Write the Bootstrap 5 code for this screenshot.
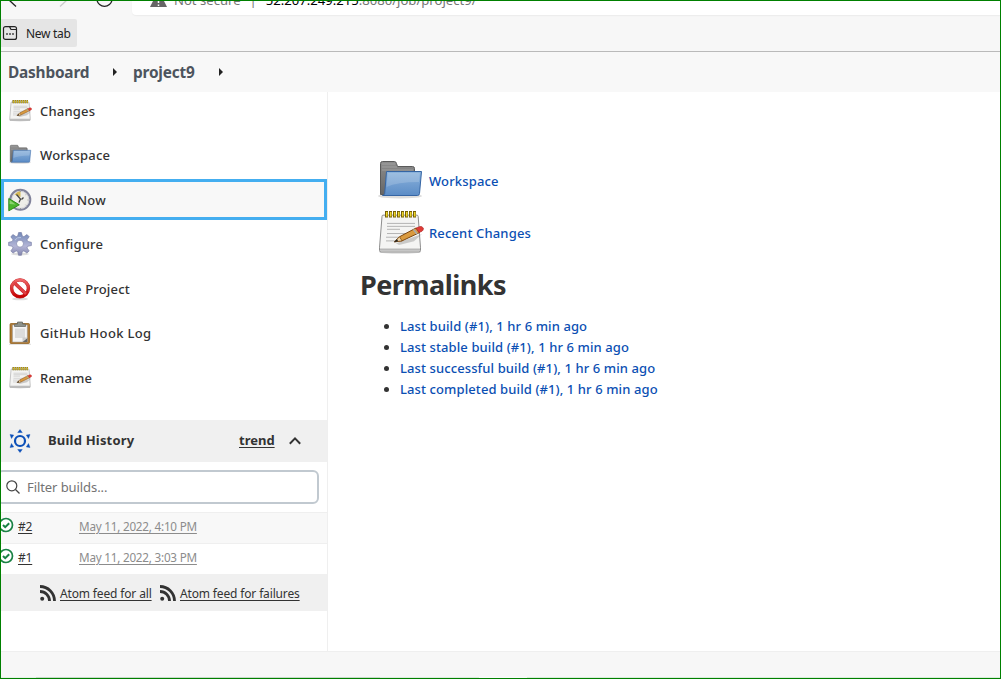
<!DOCTYPE html>
<html lang="en">
<head>
<meta charset="utf-8">
<title>project9 [Jenkins]</title>
<link href="https://cdn.jsdelivr.net/npm/bootstrap@5.3.0/dist/css/bootstrap.min.css" rel="stylesheet">
<style>
  body { font-family: "Noto Sans", "Open Sans", sans-serif; font-size: 13px; font-weight: 500; color: #333; line-height: 21px; }
  .window { width: 1001px; height: 679px; border: 1px solid #008000; overflow: hidden; background: #fff; }
  .chrome { height: 51px; background: #f7f7f7; border-bottom: 1px solid #bababa; flex: none; }
  .toolbar { height: 14px; padding-left: 1px; }
  .address { width: 868px; height: 14px; background: #fff; border-radius: 0 0 0 4px; box-shadow: 0 1px 1px #ececec; padding-left: 18px; font-weight: 400; font-size: 13.1px; color: #767676; white-space: nowrap; }
  .address span { position: relative; top: -11px; }
  .fav { width: 76px; height: 28px; margin-top: 4px; background: #e5e5e5; border-radius: 0 2px 2px 0; font-size: 12px; font-weight: 400; color: #222; letter-spacing: -.3px; }
  .crumbs { height: 40px; background: #f8f8f8; font-size: 15.4px; letter-spacing: -.2px; font-weight: 700; color: #4d545d; flex: none; }
  .arrow { border: 4px solid transparent; border-left-color: #222; border-right: 0; width: 0; height: 0; }
  .side { width: 327px; border-right: 1px solid #efefef; flex: none; }
  .tasks { margin-top: -3.5px; height: 331.5px; }
  .task { height: 40.5px; margin: 2px 0; padding-left: 7px; color: #333; text-decoration: none; letter-spacing: .2px; }
  .task span { padding-top: 1px; }
  .task svg { width: 24px; height: 24px; margin-right: 8px; }
  .task.current { background: #f8f8f8; box-shadow: inset 0 0 0 3px #44aef0; height: 41px; margin-top: 1.5px; }
  .history { height: 42px; background: #f0f0f0; font-weight: 700; }
  .history .fit { padding-bottom: 2px; }
  .history a, .build a, .feeds a { color: inherit; text-underline-offset: 2px; }
  .filter { height: 34px; margin: 8px 8px 8px -4px; border: 2px solid #c1c9d0; border-radius: 6px; color: #737373; font-weight: 400; letter-spacing: -.08px; padding-left: 7px; }
  .build { height: 31px; border-top: 1px solid #efefef; font-size: 12px; font-weight: 400; letter-spacing: -.2px; }
  .build a { padding-bottom: 3px; }
  .build .when { color: #8c8c8c; font-size: 11.7px; letter-spacing: -.22px; }
  .feeds { height: 37px; background: #f0f0f0; font-size: 12px; font-weight: 400; padding-left: 39px; letter-spacing: -.15px; }
  .feeds a { padding-top: 2px; }
  .panel { padding: 63px 0 0 32px; }
  .panel a { color: #0b4fb3; text-decoration: none; letter-spacing: .1px; }
  .big { height: 52px; padding-left: 16px; }
  .big svg { width: 48px; height: 48px; margin-right: 5px; }
  .big .fit { letter-spacing: .15px; }
  h1 { font-size: 27px; letter-spacing: -.55px; font-weight: 700; line-height: 36px; margin: 8px 0 13px; }
  .links { padding-left: 40px; }
  .links li::marker { font-size: 13px; }
  .foot { height: 27px; background: #f7f7f7; border-top: 1px solid #efefef; flex: none; }
  .foot i { height: 1px; }
  .fit { display: inline-block; white-space: nowrap; }
</style>
</head>
<body>
<svg width="0" height="0" class="position-absolute">
  <defs>
    <linearGradient id="blue" x2="0" y2="1"><stop stop-color="#8cb3dc"/><stop offset="1" stop-color="#5b8cc6"/></linearGradient>
    <linearGradient id="gray" x2="0" y2="1"><stop stop-color="#8d8d8d"/><stop offset="1" stop-color="#666"/></linearGradient>
    <linearGradient id="gear" x2="0" y2="1"><stop stop-color="#7289b8"/><stop offset=".6" stop-color="#b4b5d6"/><stop offset="1" stop-color="#8285ad"/></linearGradient>
    <linearGradient id="red" x2="0" y2="1"><stop stop-color="#ee6667"/><stop offset="1" stop-color="#c50000"/></linearGradient>
  </defs>
  <symbol id="folder" viewBox="0 0 48 48">
    <ellipse cx="24" cy="39" rx="22" ry="2.500" fill="#ddd"/>
    <path d="M4.500 37.500V6.500q0-2 2-2h12q1.500 0 2 2l1 3h15q2 0 2 2v26z" fill="url(#gray)" stroke="#5a5a5a"/>
    <path d="M6 7h13M6 10h15M6 13h31" stroke="#aaa" stroke-width=".7"/>
    <path d="M10.500 14.500h35L43.500 36.500q-.2 2-2 2H6.500q2-.5 2.200-2z" fill="url(#blue)" stroke="#3565a4"/>
    <path d="M11.800 16h32L43 25Q21 25 10.500 30z" fill="#fff" opacity=".17"/>
  </symbol>
  <symbol id="notes" viewBox="0 0 48 48">
   <g transform="translate(0 2) scale(1 .92)">
    <ellipse cx="24" cy="44.500" rx="21" ry="2" fill="#ddd"/>
    <path d="M7 4.500h34q1 0 1.200 1.500l2.300 34v3q0 1.500-1.500 1.500H5q-1.500 0-1.500-1.500v-3L6 6q0-1.500 1-1.500z" fill="#f4f4f3" stroke="#888"/>
    <path d="M4 42h40" stroke="#b7b7b7" stroke-width="2.500"/>
    <path d="M11 13.500h28M11 16.700h28M11 19.900h13M11 24.500h28M10 28.500h20M10 32.500h14" stroke="#aaa" stroke-width=".9"/>
    <path d="M9 3.500h32" stroke="#745f08" stroke-width="7" stroke-dasharray="3 1"/>
    <path d="M10 3.500h31" stroke="#edd52b" stroke-width="5" stroke-dasharray="1.500 2.500"/>
    <path d="M20 35l26-10-8 8-15 4z" fill="#777" opacity=".35"/>
    <path d="M18.500 33.500l5-5.500L40 18.500l3.500 5L26 32.500z" fill="#d99a3f" stroke="#76410b"/>
    <path d="M18.500 33.500l5-5.500 2.500 4.500z" fill="#efd5a7" stroke="#76410b" stroke-width=".7"/>
    <path d="M18 34l3-3.500 1.200 2.500z" fill="#222"/>
    <path d="M40 18.500l4-1.700q2.500-.5 3.300 2 .5 2-1.300 3.200l-3 1.500z" fill="#df3b36" stroke="#a22" stroke-width=".6"/>
    <path d="M37.500 20l3.500 5" stroke="#aaa" stroke-width="1.800"/>
   </g>
  </symbol>
  <symbol id="clock" viewBox="0 0 24 24">
    <circle cx="12.300" cy="11.800" r="10" fill="#eeede9" stroke="#80829a" stroke-width="2"/>
    <circle cx="12.300" cy="11.800" r="8.500" fill="none" stroke="#c9c9d4" stroke-width=".7"/>
    <path d="M12.500 9L6.500 6.500q3-3.500 6-3.500z" fill="#d4b957"/>
    <path d="M8.500 6.500l4 4.500-1.500 3.500M13.500 11.500l2-2" stroke="#444" stroke-width="1.300" fill="none"/>
    <path d="M12.300 3v1M20.500 12h-1M18.300 6l-.7.7M18.300 17.500l-.7-.7M12.500 20v1" stroke="#999"/>
    <path d="M.8 10.500v12.300L11.300 16.800z" fill="#4bb52d" stroke="#2f8a1a"/>
    <path d="M1.600 12v4l6 .5z" fill="#8bd46f"/>
  </symbol>
  <symbol id="cog" viewBox="0 0 24 24">
    <ellipse cx="12" cy="22" rx="9" ry="1.500" fill="#ddd"/>
    <path fill="url(#gear)" stroke="#7076a0" stroke-width=".6" fill-rule="evenodd" d="M10.600.5h2.800l.9 3.500 1.600.7 3.100-2.200 2.200 2.200L19 7.800l.7 1.600 3.700.9v3.200l-3.700.8-.7 1.600 2.200 3-2.200 2.200-3.100-2.200-1.600.7-.9 3.700h-2.800l-.9-3.700-1.600-.7L5 21.100l-2.200-2.200L5 15.900l-.7-1.600L.6 13.500v-3.200l3.700-.9L5 7.800 2.800 4.700 5 2.500l3.100 2.200L9.700 4zM12 8.200a3.500 3.500 0 100 7 3.500 3.500 0 000-7z"/>
    <path d="M7 8q2-3 6-2.500" stroke="#b9c6e2" fill="none"/>
  </symbol>
  <symbol id="stop" viewBox="0 0 24 24">
    <ellipse cx="12" cy="22" rx="8" ry="1.300" fill="#ddd"/>
    <circle cx="12" cy="11.300" r="8.400" fill="#fff" stroke="#c02228" stroke-width="3.400"/>
    <path d="M6 5.500l12 11.500" stroke="#c3141a" stroke-width="3.400"/>
    <circle cx="12" cy="11.300" r="8.400" fill="none" stroke="url(#red)" stroke-width="2.600"/>
    <path d="M6 5.500l12 11.500" stroke="#e04044" stroke-width="2.500"/>
  </symbol>
  <symbol id="clip" viewBox="0 0 24 24">
    <path d="M1 23.300h22" stroke="#ddd"/>
    <rect x="2" y="2.500" width="19.500" height="20" rx="1" fill="#b07c38" stroke="#8a5711" stroke-width=".7"/>
    <path d="M4.500 4h14.800v17H4.500z" fill="#f5f5f5" stroke="#999" stroke-width=".5"/>
    <path d="M7 7.500h10v9.500H7z" fill="#dcdcdc"/>
    <path d="M19.300 17l-5 4h5z" fill="#666"/><path d="M14.500 16.500h4.800l-4.800 4.500z" fill="#ccc"/>
    <path d="M6.500 5.500V4q0-1 1-1h2V1h5v2h2q1 0 1 1v1.500z" fill="#8d918a" stroke="#5e625b" stroke-width=".7"/>
  </symbol>
  <symbol id="ok" viewBox="0 0 16 16">
    <circle cx="8" cy="8" r="6.500" fill="#fff" stroke="#1a8244" stroke-width="1.700"/><path d="M5 8l2.200 2.200 4-4" fill="none" stroke="#1a8244" stroke-width="2"/>
  </symbol>
  <symbol id="rss" viewBox="0 0 16 16">
    <circle cx="2.200" cy="13.800" r="2" fill="#333"/><path d="M0 6.500a9.500 9.500 0 019.500 9.500M0 1.500A14.500 14.500 0 0114.500 16" fill="none" stroke="#333" stroke-width="2.800"/>
  </symbol>
</svg>

<div class="window d-flex flex-column">
  <header class="chrome">
    <div class="toolbar d-flex justify-content-between">
      <svg width="124" height="8" viewBox="2 1 124 8" fill="none" stroke="#222" stroke-width="1.300"><path d="M9 0l7 6.500"/><path d="M67 0l-7 6.500" stroke="#ccc"/><path d="M97 0a7.600 7.600 0 0015 0"/></svg>
      <div class="address d-flex">
        <svg width="17" height="7" viewBox="0 0 17 7"><path d="M3 0h11l3 6H0z" fill="#666"/><path d="M8.500 0v2M8.500 3.500v1.500" stroke="#fff" stroke-width="1.500"/></svg>
        <span class="fit" style="margin-left:7px">Not secure</span>
        <span class="fit" style="margin:0 9px 0 9px">|</span>
        <span class="fit"><b class="fw-normal text-black">52.207.249.215</b>:8080/job/project9/</span>
      </div>
    </div>
    <div class="fav d-flex align-items-center">
      <svg width="16" height="16" viewBox="0 0 16 16" fill="none" stroke="#222" stroke-width="1.200" style="margin:0 8px 0 1px"><path d="M4 1.600h8.500a2 2 0 012 2v8.800a2 2 0 01-2 2h-9a2 2 0 01-2-2V3.600a2 2 0 012-2zM7.500 1.600l1.500 2.900h5.500"/><path stroke-width="1.600" d="M4.200 9h1.600M7.200 9h1.600M10.200 9h1.600"/></svg>
      <span class="fit">New tab</span>
    </div>
  </header>

  <nav class="crumbs d-flex align-items-center">
    <span class="fit" style="margin-left:7px;width:81px">Dashboard</span><span class="arrow" style="margin:0 16px 0 24px"></span>
    <span class="fit" style="width:62px">project9</span><span class="arrow" style="margin-left:24px"></span>
  </nav>

  <div class="d-flex flex-grow-1">
    <aside class="side">
      <div class="tasks d-flex flex-column">
        <a class="task d-flex align-items-center" href="#"><svg><use href="#notes"/></svg><span class="fit">Changes</span></a>
        <a class="task d-flex align-items-center" href="#"><svg><use href="#folder"/></svg><span class="fit">Workspace</span></a>
        <a class="task current d-flex align-items-center" href="#"><svg><use href="#clock"/></svg><span class="fit" style="letter-spacing:.3px">Build Now</span></a>
        <a class="task d-flex align-items-center" href="#"><svg><use href="#cog"/></svg><span class="fit">Configure</span></a>
        <a class="task d-flex align-items-center" href="#"><svg><use href="#stop"/></svg><span class="fit">Delete Project</span></a>
        <a class="task d-flex align-items-center" href="#"><svg><use href="#clip"/></svg><span class="fit" style="letter-spacing:.33px">GitHub Hook Log</span></a>
        <a class="task d-flex align-items-center" href="#"><svg><use href="#notes"/></svg><span class="fit">Rename</span></a>
      </div>
      <div class="history d-flex align-items-center">
        <svg width="24" height="24" viewBox="0 0 24 24" style="margin:0 16px 0 7px"><circle cx="12" cy="12" r="5" fill="none" stroke="#0b4fb8" stroke-width="2.200"/><path d="M12 .5l2.300 3H9.700zM12 23.500l2.300-3H9.700zM2 5.500l3.700.6-2.200 3.400zM22 5.500l-3.700.6 2.200 3.400zM2 18.500l3.700-.6-2.200-3.400zM22 18.500l-3.700-.6 2.200-3.400z" fill="#0b4fb8" stroke="#0b4fb8" stroke-width=".4"/></svg>
        <span class="fit" style="width:191px;letter-spacing:.2px">Build History</span>
        <a href="#" class="fit" style="width:36px">trend</a>
        <svg width="14" height="10" viewBox="0 0 14 10" style="margin-left:13px"><path d="M1.800 7.800L7 2.400l5.200 5.400" fill="none" stroke="#333" stroke-width="2"/></svg>
      </div>
      <div class="filter d-flex align-items-center">
        <svg width="14" height="14" viewBox="0 0 14 14" style="margin-right:7px" fill="none" stroke="#444" stroke-width="1.200"><circle cx="5.800" cy="5.800" r="5"/><path d="M9.500 9.500l4 4"/></svg>
        <span class="fit">Filter builds...</span>
      </div>
      <div class="build d-flex align-items-center" style="background:#f8f8f8"><svg width="16" height="16" style="margin:-6px 4px 0 -3px"><use href="#ok"/></svg><a href="#" style="width:61px">#2</a><a href="#" class="when fit">May 11, 2022, 4:10 PM</a></div>
      <div class="build d-flex align-items-center"><svg width="16" height="16" style="margin:-6px 4px 0 -3px"><use href="#ok"/></svg><a href="#" style="width:61px">#1</a><a href="#" class="when fit">May 11, 2022, 3:03 PM</a></div>
      <div class="feeds d-flex align-items-center">
        <svg width="16" height="16" style="margin-right:4px"><use href="#rss"/></svg><a href="#" class="fit" style="width:93px">Atom feed for all</a>
        <svg width="16" height="16" style="margin:0 4px 0 7px"><use href="#rss"/></svg><a href="#" class="fit">Atom feed for failures</a>
      </div>
    </aside>
    <main class="panel">
      <div class="big d-flex align-items-center"><svg><use href="#folder"/></svg><a href="#" class="fit">Workspace</a></div>
      <div class="big d-flex align-items-center"><svg><use href="#notes"/></svg><a href="#" class="fit">Recent Changes</a></div>
      <h1><span class="fit">Permalinks</span></h1>
      <ul class="links mb-0">
        <li><a href="#">Last build (#1), 1 hr 6 min ago</a></li>
        <li><a href="#">Last stable build (#1), 1 hr 6 min ago</a></li>
        <li><a href="#">Last successful build (#1), 1 hr 6 min ago</a></li>
        <li><a href="#">Last completed build (#1), 1 hr 6 min ago</a></li>
      </ul>
    </main>
  </div>
  <footer class="foot d-flex align-items-end"><i style="width:35px;background:#e4f2e4"></i><i style="width:344px;background:#c8d9c8"></i><i style="width:99px;background:#dcebdc"></i><i style="width:48px;background:#f7fbf7"></i><i class="flex-grow-1" style="background:#d8ecd8"></i></footer>
</div>
<script src="https://cdn.jsdelivr.net/npm/bootstrap@5.3.0/dist/js/bootstrap.bundle.min.js"></script>
</body>
</html>
